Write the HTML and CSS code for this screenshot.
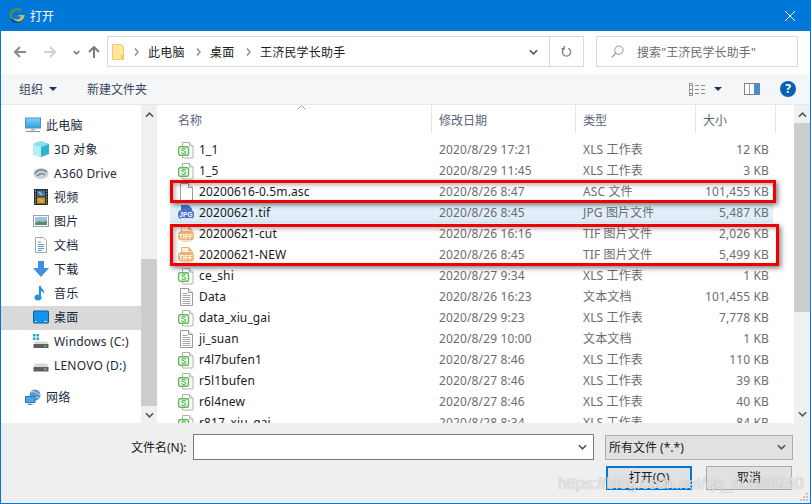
FILE: index.html
```html
<!DOCTYPE html>
<html lang="zh-CN">
<head>
<meta charset="utf-8">
<title>打开</title>
<link rel="stylesheet" href="styles.css">
</head>
<body>
<svg class="defs" aria-hidden="true">
  <defs>
    <linearGradient id="screen" x1="0" y1="0" x2="0" y2="1"><stop offset="0" stop-color="#7fd0f7"/><stop offset="1" stop-color="#2f9ee8"/></linearGradient>
    <symbol id="i-xls" viewBox="0 0 16 18">
      <path d="M4.500 1.500h7l3.500 3.500v11.500a.5.5 0 0 1-.5 .5h-10z" fill="#fff" stroke="#b0b0b0"/>
      <path d="M11.500 1.500v3.500h3.500" fill="#eee" stroke="#b0b0b0"/>
      <rect x=".7" y="5.700" width="9.800" height="8.600" rx="1.500" fill="#fff" stroke="#5cbb55" stroke-width="1.400"/>
      <text class="glyph-s" x="5.600" y="12.700">S</text>
    </symbol>
    <symbol id="i-txt" viewBox="0 0 16 18">
      <path d="M2.500 .5h8l4 4v13h-12z" fill="#fff" stroke="#9a9a9a"/>
      <path d="M10.500 .5v4h4" fill="#eee" stroke="#9a9a9a"/>
      <path d="M4.500 5.500h5M4.500 7.500h8M4.500 9.500h8M4.500 11.500h8M4.500 13.500h8M4.500 15.500h8" stroke="#a8a8a8"/>
    </symbol>
    <symbol id="i-asc" viewBox="0 0 16 18">
      <path d="M2.500 .5h8l4 4v13h-12z" fill="#fff" stroke="#9a9a9a"/>
      <path d="M10.500 .5v4h4" fill="#f0f0f0" stroke="#9a9a9a"/>
    </symbol>
    <symbol id="i-jpg" viewBox="0 0 16 18">
      <path d="M3 1h7.500l3.500 3.500v3h-11z" fill="#4a74c9"/>
      <rect x="0" y="6" width="16" height="9" rx="4" fill="#4a74c9"/>
      <path d="M3 14h11v3h-11z" fill="#dfe7f7"/>
      <text class="glyph-tag" x="8" y="13.300">JPG</text>
    </symbol>
    <symbol id="i-tif" viewBox="0 0 16 18">
      <path d="M3.500 1.500h7l3.500 3.500v3h-10.500z" fill="#fbeedd" stroke="#e6b279"/>
      <path d="M10.500 1v4h3.500z" fill="#e2a966"/>
      <rect x="0" y="6" width="16" height="9.500" rx="4" fill="#eeb06a"/>
      <path d="M3.500 15.500h10v1.500h-10z" fill="#f8e2c5"/>
      <text class="glyph-tag" x="8" y="13.500">TIFF</text>
    </symbol>
    <symbol id="i-pc" viewBox="0 0 16 16">
      <rect x=".5" y="1" width="15" height="10" fill="url(#screen)" stroke="#5a8fb5"/>
      <path d="M6 11.500h4v2h-4z" fill="#a8b6c0"/>
      <path d="M1 14.500h14" stroke="#8c9aa5" stroke-width="1.200"/>
    </symbol>
    <symbol id="i-3d" viewBox="0 0 16 16">
      <path d="M8 0l8 3v10l-8 3-8-3v-10z" fill="#2fb5cd"/>
      <path d="M0 3l8 3 8-3-8-3z" fill="#8ce3ee"/>
      <path d="M0 3l8 3v10l-8-3z" fill="#b7eef3"/>
    </symbol>
    <symbol id="i-a360" viewBox="0 0 16 16">
      <ellipse cx="8" cy="8.500" rx="7.500" ry="5.500" fill="#c8d2da"/>
      <path d="M2 9c2-5 9-5 12-2M4 11c3-3 6-3 8-1" fill="none" stroke="#71848f" stroke-width="1.500"/>
    </symbol>
    <symbol id="i-video" viewBox="0 0 16 16">
      <rect x="1" y="0" width="14" height="16" fill="#2c2c2c"/>
      <rect x="4" y="1.500" width="8" height="6" fill="#3975c7"/>
      <rect x="4" y="8.500" width="8" height="6" fill="#c79a2f"/>
      <path d="M6 3l3 3M6 10l4 3" stroke="#e5c23a" stroke-width="1.500"/>
      <path d="M2 2h1M2 5h1M2 8h1M2 11h1M2 14h1M13 2h1M13 5h1M13 8h1M13 11h1M13 14h1" stroke="#ddd"/>
    </symbol>
    <symbol id="i-pic" viewBox="0 0 16 16">
      <rect x=".5" y="2.500" width="15" height="11" fill="#fff" stroke="#9aa0a6"/>
      <rect x="2" y="4" width="12" height="8" fill="#9cc4de"/>
      <path d="M2 10l4-2 3 1 5-1v4h-12z" fill="#5d8a6a"/>
    </symbol>
    <symbol id="i-doc" viewBox="0 0 16 16">
      <path d="M2.500 .5h8l3 3v12h-11z" fill="#fff" stroke="#a5a5a5"/>
      <path d="M5 5h3M5 7.500h6M5 9.500h6M5 11.500h6M5 13.500h4" stroke="#5b9bd0"/>
    </symbol>
    <symbol id="i-down" viewBox="0 0 16 16">
      <path d="M5 0h6v7h5l-8 9-8-9h5z" fill="#3f8fdc"/>
    </symbol>
    <symbol id="i-music" viewBox="0 0 16 16">
      <path d="M7 1v10.500" stroke="#1d93ec" stroke-width="2" fill="none"/>
      <ellipse cx="5" cy="12.500" rx="3.500" ry="3" fill="#1d93ec"/>
      <path d="M7 1c1 3 5 3 4 8-.5-2-2-3-4-3.500z" fill="#1d93ec"/>
    </symbol>
    <symbol id="i-desk" viewBox="0 0 16 16">
      <rect x=".5" y="2" width="15" height="12" rx=".5" fill="#1493ea" stroke="#0f5f9e"/>
      <path d="M2 12.500h2M11 12.500h3" stroke="#bfe3fb"/>
    </symbol>
    <symbol id="i-disk" viewBox="0 0 16 16">
      <path d="M2 6.500h12l1.500 4h-15z" fill="#d8d8d8"/>
      <rect x=".5" y="10" width="15" height="4.500" fill="#5f5f5f"/>
      <rect x="11" y="11.500" width="2.500" height="1.500" fill="#58d14e"/>
    </symbol>
    <symbol id="i-win" viewBox="0 0 16 16">
      <path d="M0 1h2.500v2.500h-2.500zM3.500 1h2.500v2.500h-2.500zM0 4.500h2.500v2.500h-2.500zM3.500 4.500h2.500v2.500h-2.500z" fill="#18a8f0"/>
      <path d="M2 8.500h12l1.500 3h-15z" fill="#d8d8d8"/>
      <rect x=".5" y="11" width="15" height="4" fill="#5f5f5f"/>
      <rect x="11" y="12.300" width="2.500" height="1.400" fill="#58d14e"/>
    </symbol>
    <symbol id="i-net" viewBox="0 0 16 16">
      <circle cx="10" cy="6" r="5.500" fill="#5b96cf"/>
      <path d="M6 3c3-1 6 1 9 3M7 9c2-1 5-1 7 0" stroke="#cfe3f3" fill="none"/>
      <rect x=".5" y="7.500" width="9.500" height="6" fill="#4aa8e8" stroke="#2f78ad"/>
      <path d="M5 13.500v1.500M2.500 15.500h5" stroke="#6b8aa0"/>
    </symbol>
    <symbol id="i-chev-up" viewBox="0 0 10 6"><path d="M1 5l4-4 4 4" fill="none" stroke="#555" stroke-width="1.800"/></symbol>
    <symbol id="i-chev-down" viewBox="0 0 10 6"><path d="M1 1l4 4 4-4" fill="none" stroke="#555" stroke-width="1.800"/></symbol>
    <symbol id="i-crumb" viewBox="0 0 5 8"><path d="M1 .5l3 3.500-3 3.500" fill="none" stroke="#8b8b8b" stroke-width="1.400"/></symbol>
    <symbol id="i-caret" viewBox="0 0 8 4"><path d="M0 0h8l-4 4z" fill="#1f3457"/></symbol>
  </defs>
</svg>

<div class="window">
  <header class="titlebar">
    <svg class="app-icon" viewBox="0 0 16 16" aria-hidden="true">
      <path d="M1 10a7.500 7.500 0 0 0 14 0c-3 3.500-9 4-14 0z" fill="#14406b"/>
      <path d="M1 10a7.500 7.500 0 0 1 12-8l-1.500 1.500a5 5 0 0 0-7.500 6.500l-1 1z" fill="#5f8f3c"/>
      <path d="M4 10c3 2.500 7 1.500 8-1.500h-3l.5-1.500h6c0 3-2 6-5 6.500-3 .5-5.500-1-6.500-3.500z" fill="#c9b96a"/>
    </svg>
    <span class="title">打开</span>
    <svg class="close" viewBox="0 0 10 10" aria-hidden="true"><path d="M0 0l10 10M10 0l-10 10" stroke="#fff" stroke-width="1"/></svg>
  </header>

  <nav class="navbar">
    <svg class="nav-arrow back" viewBox="0 0 12 12" aria-hidden="true"><path d="M12 6h-10M6 1l-5 5 5 5" fill="none" stroke="#8a8a8a" stroke-width="2"/></svg>
    <svg class="nav-arrow forward" viewBox="0 0 12 12" aria-hidden="true"><path d="M0 6h10M6 1l5 5-5 5" fill="none" stroke="#d2d2d2" stroke-width="2"/></svg>
    <svg class="nav-drop" aria-hidden="true"><use href="#i-chev-down"/></svg>
    <svg class="nav-arrow up" viewBox="0 0 12 12" aria-hidden="true"><path d="M6 12v-10M1 6l5-5 5 5" fill="none" stroke="#7a7a7a" stroke-width="2"/></svg>
    <div class="address">
      <svg class="folder" viewBox="0 0 12 16" aria-hidden="true"><path d="M.5.500h8.500l2.500 2v13h-11z" fill="#ffe79e" stroke="#eccd74"/><path d="M9 11h2.500v4.500h-2.500z" fill="#f6c94f"/></svg>
      <svg class="crumb" aria-hidden="true"><use href="#i-crumb"/></svg><span class="crumb-text">此电脑</span>
      <svg class="crumb" aria-hidden="true"><use href="#i-crumb"/></svg><span class="crumb-text">桌面</span>
      <svg class="crumb" aria-hidden="true"><use href="#i-crumb"/></svg><span class="crumb-text">王济民学长助手</span>
      <span class="spring"></span>
      <svg class="addr-drop" aria-hidden="true"><use href="#i-chev-down"/></svg>
      <span class="refresh-box">
        <svg class="refresh" viewBox="0 0 12 12" aria-hidden="true"><path d="M4 2.500a4.500 4.500 0 1 0 4 0M3.500 0v3h-3" fill="none" stroke="#808080" stroke-width="1.500"/></svg>
      </span>
    </div>
    <div class="search">
      <svg class="search-icon" viewBox="0 0 14 14" aria-hidden="true"><circle cx="8.500" cy="5.500" r="4.500" fill="none" stroke="#8a8a8a"/><path d="M5 9l-4 4" stroke="#8a8a8a" stroke-width="1.200"/></svg>
      <span class="search-text">搜索"王济民学长助手"</span>
    </div>
  </nav>

  <div class="toolbar">
    <span class="tool">组织</span>
    <svg class="caret" aria-hidden="true"><use href="#i-caret"/></svg>
    <span class="tool new-folder">新建文件夹</span>
    <span class="spring"></span>
    <svg class="view-icon" viewBox="0 0 16 13" aria-hidden="true">
      <rect x=".5" y=".5" width="3" height="12" fill="#fff" stroke="#9a9a9a"/>
      <path d="M1 2.500h2" stroke="#5b9bd0"/><path d="M1 6.500h2" stroke="#7fae5a"/><path d="M1 10.500h2" stroke="#d04a3a"/>
      <path d="M6 2.500h4M12 2.500h4M6 6.500h4M12 6.500h4M6 10.500h4M12 10.500h4" stroke="#8c8c8c"/>
    </svg>
    <svg class="caret view-caret" aria-hidden="true"><use href="#i-caret"/></svg>
    <svg class="pane-icon" viewBox="0 0 16 12" aria-hidden="true"><rect x=".5" y=".5" width="15" height="11" fill="#fff" stroke="#808080"/><rect x="10" y="1" width="5" height="10" fill="#3f8fe0"/><path d="M5.500 1v10" stroke="#a0a0a0"/></svg>
    <span class="help">?</span>
  </div>

  <main class="panes">
    <aside class="tree">
      <div class="tree-item"><svg class="ti"><use href="#i-pc"/></svg><span>此电脑</span></div>
      <div class="tree-item child"><svg class="ti"><use href="#i-3d"/></svg><span>3D 对象</span></div>
      <div class="tree-item child"><svg class="ti"><use href="#i-a360"/></svg><span>A360 Drive</span></div>
      <div class="tree-item child"><svg class="ti"><use href="#i-video"/></svg><span>视频</span></div>
      <div class="tree-item child"><svg class="ti"><use href="#i-pic"/></svg><span>图片</span></div>
      <div class="tree-item child"><svg class="ti"><use href="#i-doc"/></svg><span>文档</span></div>
      <div class="tree-item child"><svg class="ti"><use href="#i-down"/></svg><span>下载</span></div>
      <div class="tree-item child"><svg class="ti"><use href="#i-music"/></svg><span>音乐</span></div>
      <div class="tree-item child active"><svg class="ti"><use href="#i-desk"/></svg><span>桌面</span></div>
      <div class="tree-item child"><svg class="ti"><use href="#i-win"/></svg><span>Windows (C:)</span></div>
      <div class="tree-item child"><svg class="ti"><use href="#i-disk"/></svg><span>LENOVO (D:)</span></div>
      <div class="tree-item network"><svg class="ti"><use href="#i-net"/></svg><span>网络</span></div>
    </aside>
    <div class="vscroll">
      <svg class="sb-up" aria-hidden="true"><use href="#i-chev-up"/></svg>
      <div class="track"><div class="thumb thumb-left"></div></div>
      <svg class="sb-down" aria-hidden="true"><use href="#i-chev-down"/></svg>
    </div>

    <section class="files">
      <div class="head">
        <svg class="sort" viewBox="0 0 9 5" aria-hidden="true"><path d="M.5 4.500l4-4 4 4" fill="none" stroke="#a0a0a0"/></svg>
        <span class="hcol">名称</span><span class="hcol">修改日期</span><span class="hcol">类型</span><span class="hcol">大小</span>
      </div>
      <div class="row"><span class="name"><svg class="fi"><use href="#i-xls"/></svg>1_1</span><span>2020/8/29 17:21</span><span>XLS 工作表</span><span class="size">12 KB</span></div>
      <div class="row"><span class="name"><svg class="fi"><use href="#i-xls"/></svg>1_5</span><span>2020/8/29 11:45</span><span>XLS 工作表</span><span class="size">3 KB</span></div>
      <div class="row"><span class="name"><svg class="fi"><use href="#i-asc"/></svg>20200616-0.5m.asc</span><span>2020/8/26 8:47</span><span>ASC 文件</span><span class="size">101,455 KB</span></div>
      <div class="row hover"><span class="name"><svg class="fi"><use href="#i-jpg"/></svg>20200621.tif</span><span>2020/8/26 8:45</span><span>JPG 图片文件</span><span class="size">5,487 KB</span></div>
      <div class="row"><span class="name"><svg class="fi"><use href="#i-tif"/></svg>20200621-cut</span><span>2020/8/26 16:16</span><span>TIF 图片文件</span><span class="size">2,026 KB</span></div>
      <div class="row"><span class="name"><svg class="fi"><use href="#i-tif"/></svg>20200621-NEW</span><span>2020/8/26 8:45</span><span>TIF 图片文件</span><span class="size">5,499 KB</span></div>
      <div class="row"><span class="name"><svg class="fi"><use href="#i-xls"/></svg>ce_shi</span><span>2020/8/27 9:34</span><span>XLS 工作表</span><span class="size">1 KB</span></div>
      <div class="row"><span class="name"><svg class="fi"><use href="#i-txt"/></svg>Data</span><span>2020/8/26 16:23</span><span>文本文档</span><span class="size">101,455 KB</span></div>
      <div class="row"><span class="name"><svg class="fi"><use href="#i-xls"/></svg>data_xiu_gai</span><span>2020/8/29 9:23</span><span>XLS 工作表</span><span class="size">7,778 KB</span></div>
      <div class="row"><span class="name"><svg class="fi"><use href="#i-txt"/></svg>ji_suan</span><span>2020/8/29 10:00</span><span>文本文档</span><span class="size">1 KB</span></div>
      <div class="row"><span class="name"><svg class="fi"><use href="#i-xls"/></svg>r4l7bufen1</span><span>2020/8/27 8:46</span><span>XLS 工作表</span><span class="size">110 KB</span></div>
      <div class="row"><span class="name"><svg class="fi"><use href="#i-xls"/></svg>r5l1bufen</span><span>2020/8/27 8:46</span><span>XLS 工作表</span><span class="size">39 KB</span></div>
      <div class="row"><span class="name"><svg class="fi"><use href="#i-xls"/></svg>r6l4new</span><span>2020/8/27 8:46</span><span>XLS 工作表</span><span class="size">40 KB</span></div>
      <div class="row"><span class="name"><svg class="fi"><use href="#i-xls"/></svg>r817_xiu_gai</span><span>2020/8/28 8:34</span><span>XLS 工作表</span><span class="size">84 KB</span></div>
    </section>
    <div class="vscroll right">
      <svg class="sb-up" aria-hidden="true"><use href="#i-chev-up"/></svg>
      <div class="track"><div class="thumb thumb-right"></div></div>
      <svg class="sb-down" aria-hidden="true"><use href="#i-chev-down"/></svg>
    </div>
  </main>

  <footer class="footer">
    <div class="foot-row">
      <label class="fname-label">文件名(N):</label>
      <div class="fname-input"><svg class="combo-chev" aria-hidden="true"><use href="#i-chev-down"/></svg></div>
      <div class="filter"><span>所有文件 (*.*)</span><svg class="combo-chev" aria-hidden="true"><use href="#i-chev-down"/></svg></div>
    </div>
    <div class="foot-row buttons">
      <button class="btn primary">打开(O)</button>
      <button class="btn">取消</button>
    </div>
    <svg class="grip" viewBox="0 0 10 10" aria-hidden="true"><path d="M7 1h2v2h-2zM4 4h2v2h-2zM7 4h2v2h-2zM1 7h2v2h-2zM4 7h2v2h-2zM7 7h2v2h-2z" fill="#c4c4c4"/></svg>
  </footer>

  <div class="mark mark-a"></div>
  <div class="mark mark-b"></div>
  <div class="watermark">https://blog.csdn.net/qq_40089240</div>
</div>
</body>
</html>
```

FILE: styles.css
```css
* { box-sizing: border-box; }
html, body { margin: 0; padding: 0; }
body {
  width: 811px;
  height: 504px;
  overflow: hidden;
  background: #fff;
  font-family: "Noto Sans", "Noto Sans CJK SC", sans-serif;
  font-size: 12px;
  color: #1a1a1a;
}
.defs { display: block; width: 0; height: 0; overflow: hidden; }
svg { display: block; flex: none; }
.spring { flex: 1; }

.glyph-s {
  font-family: "Liberation Sans", sans-serif;
  font-size: 8.500px;
  font-weight: 700;
  fill: #4fb64a;
  text-anchor: middle;
}
.glyph-tag {
  font-family: "Liberation Sans", sans-serif;
  font-size: 6.500px;
  font-weight: 700;
  fill: #fff;
  text-anchor: middle;
}

.window {
  position: relative;
  width: 811px;
  height: 504px;
  display: flex;
  flex-direction: column;
  border: 1px solid #0078d7;
  border-top: 0;
  background: #fff;
  overflow: hidden;
}

.titlebar {
  height: 31px;
  flex: none;
  margin: 0 -1px;
  padding: 0 14px 0 9px;
  background: #0078d7;
  display: flex;
  align-items: center;
  color: #fff;
}
.app-icon { width: 16px; height: 16px; }
.title { margin-left: 5px; font-size: 12px; }
.close { width: 10px; height: 10px; margin-left: auto; margin-right: 2px; }

.navbar {
  height: 43px;
  flex: none;
  display: flex;
  align-items: flex-start;
  padding-top: 5px;
}
.nav-arrow { width: 12px; height: 12px; margin-top: 10px; }
.back { margin-left: 13px; }
.forward { margin-left: 18px; }
.nav-drop { width: 7px; height: 5px; margin: 14px 0 0 17px; }
.up { margin-left: 8px; }
.address {
  width: 477px;
  height: 31px;
  margin-left: 7px;
  border: 1px solid #d9d9d9;
  display: flex;
  align-items: center;
  padding-left: 4px;
}
.folder { width: 12px; height: 16px; }
.crumb { width: 5px; height: 8px; margin: 0 9px 0 11px; }
.folder + .crumb { margin-left: 10px; }
.crumb-text { margin-right: .5px; color: #1a1a1a; letter-spacing: .2px; }
.addr-drop { width: 9px; height: 6px; margin-right: 11px; }
.refresh-box {
  width: 34px;
  height: 29px;
  border-left: 1px solid #d9d9d9;
  display: flex;
  align-items: center;
  justify-content: center;
}
.refresh { width: 11px; height: 11px; }
.search {
  width: 202px;
  height: 31px;
  margin-left: 12px;
  border: 1px solid #d9d9d9;
  display: flex;
  align-items: center;
  padding-left: 14px;
}
.search-icon { width: 13px; height: 13px; }
.search-text { margin-left: 13px; color: #6d6d6d; letter-spacing: .1px; }

.toolbar {
  height: 31px;
  flex: none;
  background: #f5f6f7;
  border-bottom: 1px solid #e8e8e8;
  display: flex;
  align-items: center;
  padding: 0 14px 0 18px;
}
.tool { color: #354763; }
.caret { width: 8px; height: 4px; margin-left: 6px; }
.new-folder { margin-left: 30px; }
.view-icon { width: 16px; height: 13px; }
.view-caret { margin-left: 9px; }
.pane-icon { width: 16px; height: 12px; margin-left: 22px; }
.help {
  width: 16px;
  height: 16px;
  margin-left: 20px;
  border-radius: 50%;
  background: #0b61b5;
  color: #fff;
  font-weight: 700;
  font-size: 12px;
  line-height: 16px;
  text-align: center;
}

.panes {
  height: 318px;
  flex: none;
  display: flex;
  overflow: hidden;
}
.tree {
  width: 140px;
  flex: none;
  padding-top: 9px;
  color: #1a2a3a;
  letter-spacing: .2px;
}
.tree-item {
  height: 24px;
  display: flex;
  align-items: center;
  gap: 5px;
  padding-left: 24px;
}
.tree-item > * { margin-bottom: 2px; }
.tree-item.child { padding-left: 32px; }
.tree-item.active { background: #d9d9d9; }
.tree-item.network { margin-top: 8px; }
.ti { width: 16px; height: 16px; }

.vscroll {
  width: 16px;
  flex: none;
  display: flex;
  flex-direction: column;
  align-items: center;
  background: #f0f0f0;
}
.sb-up, .sb-down { width: 9px; height: 6px; flex: none; }
.sb-up { margin: 7px 0 5px; }
.sb-down { margin: 6px 0 6px; }
.track { flex: 1; width: 100%; }
.thumb { width: 100%; background: #cdcdcd; }
.thumb-left { margin-top: 136px; height: 147px; }
.thumb-right { height: 189px; }

.files {
  width: 634px;
  flex: none;
  margin-left: 3px;
  overflow: hidden;
  color: #6d6d6d;
}
.head {
  position: relative;
  height: 34px;
  display: grid;
  grid-template-columns: 272px 144px 120px 80px;
}
.hcol {
  height: 28px;
  padding: 6px 0 0 7px;
  color: #57667b;
  border-right: 1px solid #e5e5e5;
}
.hcol:first-of-type { padding-left: 18px; }
.sort { position: absolute; left: 137px; top: 0; width: 9px; height: 5px; }
.row {
  height: 21px;
  width: 603px;
  margin-left: 10px;
  display: grid;
  grid-template-columns: 269px 144px 120px 66px;
  align-items: center;
  line-height: 21px;
  white-space: nowrap;
  letter-spacing: .13px;
}
.row.hover { background: linear-gradient(#e8f3fc, #dcebf9); }
.name {
  display: flex;
  align-items: center;
  gap: 5px;
  padding-left: 8px;
  color: #1a1a1a;
}
.fi { width: 16px; height: 18px; }
.size { text-align: right; }

.footer {
  position: relative;
  flex: 1;
  background: #efefef;
  padding-top: 11px;
}
.foot-row { display: flex; align-items: center; }
.fname-label { width: 192px; padding-left: 130px; white-space: nowrap; }
.fname-input {
  width: 401px;
  height: 26px;
  background: #fff;
  border: 1px solid #7a7a7a;
  display: flex;
  align-items: center;
  justify-content: flex-end;
  padding-right: 6px;
}
.filter {
  width: 188px;
  height: 25px;
  margin-left: 11px;
  background: #e1e1e1;
  border: 1px solid #adadad;
  display: flex;
  align-items: center;
  justify-content: space-between;
  padding: 0 6px 0 3px;
}
.combo-chev { width: 9px; height: 6px; }
.buttons { justify-content: flex-end; gap: 14px; padding-right: 18px; margin-top: 6px; }
.btn {
  width: 86px;
  height: 24px;
  padding: 0 0 2px;
  font: inherit;
  color: #1a1a1a;
  background: #e1e1e1;
  border: 1px solid #adadad;
}
.btn.primary { border: 2px solid #0078d7; }
.grip { position: absolute; right: 1px; bottom: 1px; width: 10px; height: 10px; }

.mark {
  position: absolute;
  border: 3px solid #f00000;
  box-shadow: 2px 2px 5px rgba(0, 0, 0, .5), inset 2px 2px 4px rgba(0, 0, 0, .3);
  pointer-events: none;
}
.mark-a { left: 169px; top: 180px; width: 606px; height: 23px; }
.mark-b { left: 169px; top: 224px; width: 609px; height: 42px; }

.watermark {
  position: absolute;
  left: 557px;
  top: 475px;
  font-family: "Liberation Sans", sans-serif;
  font-size: 16px;
  color: rgba(255, 255, 255, .75);
  text-shadow: 0 0 1px rgba(110, 110, 110, .7);
  white-space: nowrap;
}
```
